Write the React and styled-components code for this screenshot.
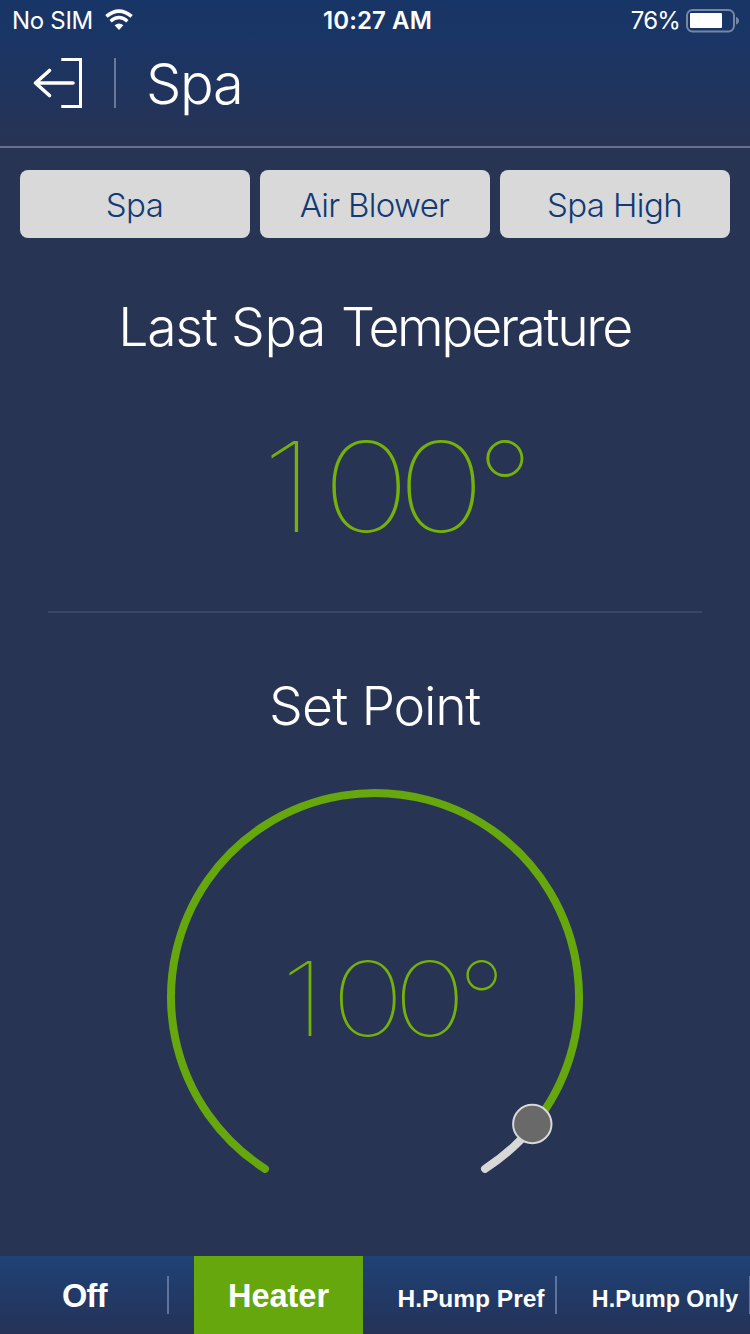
import React from "react";
import styled, { createGlobalStyle } from "styled-components";

const Global = createGlobalStyle`
  * { box-sizing: border-box; }
  html, body { margin: 0; padding: 0; background: #283454; }
`;

const Screen = styled.main`
  width: 750px;
  height: 1334px;
  display: flex;
  flex-direction: column;
  overflow: hidden;
  background: #283454;
  color: #fff;
  font-family: Inter, "Liberation Sans", sans-serif;
`;

const Header = styled.header`
  height: 148px;
  flex: none;
  background: linear-gradient(#183567 0, #1a3566 40px, #273354 146px);
  border-bottom: 2px solid #69708b;
`;

const StatusBar = styled.div`
  height: 41px;
  display: grid;
  grid-template-columns: 1fr auto 1fr;
  align-items: center;
  padding: 0 10px 0 12px;
  font-size: 24px;
`;

const StatusGroup = styled.div`
  display: flex;
  align-items: center;
  justify-content: ${(p) => (p.$end ? "flex-end" : "flex-start")};
  gap: ${(p) => p.$gap}px;
`;

const StatusText = styled.span`
  font-weight: ${(p) => p.$weight || 400};
  letter-spacing: ${(p) => p.$spacing || 0}px;
  padding-left: ${(p) => p.$inset || 0}px;
  white-space: nowrap;
`;

const TitleBar = styled.div`
  height: 84px;
  display: flex;
  align-items: center;
  padding-left: 32px;
`;

const TitleDivider = styled.i`
  width: 2px;
  height: 50px;
  margin: 0 30px 0 31px;
  background: #69779a;
`;

const Title = styled.h1`
  margin: 2px 0 0;
  font-size: 56px;
  line-height: 60px;
  font-weight: 300;
  letter-spacing: -1.3px;
`;

const Actions = styled.div`
  display: grid;
  grid-template-columns: repeat(3, 1fr);
  gap: 10px;
  padding: 22px 20px 0;
`;

const ActionButton = styled.button`
  height: 68px;
  border: 0;
  border-radius: 8px;
  padding: 2px 1px 0 0;
  background: #d9d9d9;
  color: #113a77;
  font: 300 33px/40px Inter, sans-serif;
  letter-spacing: ${(p) => p.$spacing}px;
`;

const Section = styled.section`
  display: flex;
  flex-direction: column;
  align-items: center;
`;

const Heading = styled.h2`
  margin: ${(p) => p.$top}px 0 0;
  padding-right: 1px;
  font-size: 53.5px;
  line-height: 66px;
  font-weight: 300;
  white-space: nowrap;
`;

const Word = styled.span`
  letter-spacing: ${(p) => p.$spacing}px;
`;

const Reading = styled.div`
  display: flex;
  margin-top: ${(p) => p.$top || 0}px;
  padding-left: ${(p) => p.$shift}px;
  padding-top: ${(p) => p.$drop || 0}px;
  font-size: ${(p) => p.$size}px;
  line-height: 1.2;
  font-weight: 100;
  color: #76b10a;
`;

const Digit = styled.span`
  width: 0.597em;
  display: flex;
  justify-content: center;
  letter-spacing: ${(p) => (p.$narrow ? "0" : "-0.15em")};
  transform: ${(p) => (p.$narrow ? "translateX(-0.025em) scaleX(1.16)" : "translateX(-0.091em) scaleX(1.21)")};
  transform-origin: ${(p) => (p.$narrow ? "62%" : "50%")} 50%;
`;

const Degree = styled.span`
  width: 0.42em;
  display: flex;
  justify-content: center;
`;

const Rule = styled.hr`
  width: 654px;
  height: 2px;
  border: 0;
  margin: 49px 0 0;
  background: #3d4762;
`;

const Dial = styled.div`
  display: grid;
  place-items: center;
  width: 416px;
  height: 416px;
  margin-top: 50px;
  & > * { grid-area: 1 / 1; }
`;

const Tabs = styled.nav`
  display: grid;
  grid-template-columns: repeat(4, 169px);
  grid-template-rows: 78px;
  column-gap: 25px;
  height: 78px;
  margin-top: auto;
  background: linear-gradient(#1f4277, #243257);
`;

const Tab = styled.button`
  display: flex;
  align-items: center;
  border: 0;
  padding: 0;
  color: #fff;
  background: ${(p) => (p.$active ? "#65a70c" : "transparent")};
`;

const TabLabel = styled.span`
  flex: 1;
  text-align: center;
  font: bold ${(p) => p.$size}px/38px "Liberation Sans", sans-serif;
  letter-spacing: ${(p) => p.$spacing || 0}px;
  padding: ${(p) => (p.$long ? "8px 3px 0 0" : "2px 0 0")};
  white-space: nowrap;
`;

const TabDivider = styled.i`
  width: 2px;
  height: 38px;
  margin: 0 0 0 -2px;
  background: #5f739b;
`;

function WifiIcon() {
  return (
    <svg width="28" height="24" viewBox="0 0 28 24" fill="none" stroke="#fff">
      <path d="M1.4 7.4 Q14 -3.2 26.6 7.4" strokeWidth="3.7" />
      <path d="M5.6 12.2 Q14 5 22.4 12.2" strokeWidth="3.4" />
      <path d="M14 21 L9.6 16.2 Q14 12.6 18.4 16.2 Z" fill="#fff" stroke="none" />
    </svg>
  );
}

function BatteryIcon() {
  return (
    <svg width="54" height="24" viewBox="0 0 54 24">
      <rect x="1" y="1" width="47" height="21.5" rx="5.5" fill="none" stroke="#7686a4" strokeWidth="2" />
      <rect x="4" y="4" width="32" height="15" rx="1" fill="#fff" />
      <path d="M50 8 Q53 9 53 11.7 Q53 14.5 50 15.5 Z" fill="#7686a4" />
    </svg>
  );
}

function ExitIcon() {
  return (
    <svg width="51" height="52" viewBox="0 0 51 52" fill="none" stroke="#fff" strokeWidth="3">
      <path d="M29.3 2.5H48.5V49.5H29.3" />
      <path d="M41 26H3.5M17.5 13.5L3.5 26L17.5 38.5" strokeWidth="3.6" strokeLinecap="round" strokeLinejoin="round" />
    </svg>
  );
}

function DialTrack() {
  return (
    <svg width="416" height="416" viewBox="0 0 416 416" fill="none" strokeWidth="8" strokeLinecap="round" overflow="visible">
      <path d="M366.7 336.2A204 204 0 0 1 318 379.8" stroke="#d8d8d8" />
      <path d="M98 379.8A204 204 0 1 1 366.7 336.2" stroke="#65a70c" />
      <circle cx="365.3" cy="335" r="19.2" fill="#696969" stroke="#d8d8d8" strokeWidth="2" />
    </svg>
  );
}

function Temperature({ value, ...rest }) {
  return (
    <Reading {...rest}>
      {String(value).split("").map((d, i) => <Digit key={i} $narrow={d === "1"}>{d}</Digit>)}
      <Degree>°</Degree>
    </Reading>
  );
}

const actions = [
  { label: "Spa", spacing: -0.5 },
  { label: "Air Blower", spacing: -0.7 },
  { label: "Spa High", spacing: -0.6 },
];

const tabs = [
  { label: "Off", size: 32.5, spacing: -0.6 },
  { label: "Heater", size: 32.5, active: true },
  { label: "H.Pump Pref", size: 24.5, long: true },
  { label: "H.Pump Only", size: 23.3, long: true },
];

export default function App() {
  return (
    <Screen>
      <Global />
      <Header>
        <StatusBar>
          <StatusGroup $gap={12}>
            <StatusText $spacing={-0.3}>No SIM</StatusText>
            <WifiIcon />
          </StatusGroup>
          <StatusText $weight={600} $spacing={0.1} $inset={3}>10:27 AM</StatusText>
          <StatusGroup $end $gap={6}>
            <StatusText $spacing={-0.8}>76%</StatusText>
            <BatteryIcon />
          </StatusGroup>
        </StatusBar>
        <TitleBar>
          <ExitIcon />
          <TitleDivider />
          <Title>Spa</Title>
        </TitleBar>
      </Header>
      <Actions>
        {actions.map((a) => <ActionButton key={a.label} $spacing={a.spacing}>{a.label}</ActionButton>)}
      </Actions>
      <Section>
        <Heading $top={56}>
          <Word $spacing={-1.1}>Last </Word>
          <Word $spacing={-0.2}>Spa </Word>
          <Word $spacing={-2.4}>Temperature</Word>
        </Heading>
        <Temperature value={100} $top={52} $shift={36} $size={125} />
        <Rule />
      </Section>
      <Section>
        <Heading $top={60}>
          <Word $spacing={-0.8}>Set </Word>
          <Word $spacing={-1.3}>Point</Word>
        </Heading>
        <Dial>
          <DialTrack />
          <Temperature value={100} $shift={29} $drop={4} $size={103} />
        </Dial>
      </Section>
      <Tabs>
        {tabs.map((t) => (
          <Tab key={t.label} $active={t.active}>
            <TabLabel $size={t.size} $long={t.long} $spacing={t.spacing}>{t.label}</TabLabel>
            {!t.active && <TabDivider />}
          </Tab>
        ))}
      </Tabs>
    </Screen>
  );
}
